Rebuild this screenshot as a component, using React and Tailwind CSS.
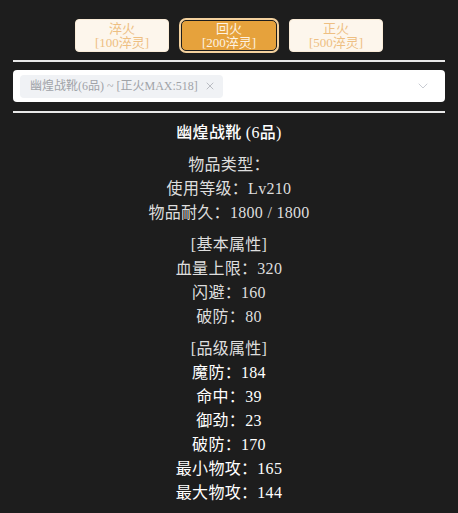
import React from 'react';
import { ChevronDown, X } from 'lucide-react';

const font = { fontFamily: '"Liberation Serif", "Noto Sans CJK SC", serif' };

const basics = ['血量上限：320', '闪避：160', '破防：80'];
const grades = ['魔防：184', '命中：39', '御劲：23', '破防：170', '最小物攻：165', '最大物攻：144'];

const FireButton = ({ name, cost, active }) => (
  <button
    className={
      active
        ? 'w-[96px] h-[31px] rounded-[5px] bg-[#e6a23c] text-[#fdf3e3] border border-[#1d1d1d] ring-2 ring-[#f3d19e] flex flex-col items-center justify-center text-[13px] leading-[14px]'
        : 'w-[94px] h-[33px] rounded-[4px] bg-[#fdf6ec] text-[#eebf82] border border-[#faecd8] flex flex-col items-center justify-center text-[13px] leading-[14px]'
    }
  >
    <span>{name}</span>
    <span>[{cost}淬灵]</span>
  </button>
);

export default function App() {
  return (
    <div className="min-h-screen bg-[#1d1d1d] px-[13px] pt-[19px] pb-2" style={font}>
      {/* fire selection */}
      <div className="flex justify-center items-center gap-[12px]">
        <FireButton name="淬火" cost="100" />
        <FireButton name="回火" cost="200" active />
        <FireButton name="正火" cost="500" />
      </div>

      <div className="mt-[8px] h-[2px] bg-[#e8e8e8]" />

      {/* item select */}
      <div className="mt-[8px] h-8 bg-white rounded-[4px] flex items-center pl-[7px] pr-[14px]">
        <div className="h-[23px] bg-[#f0f2f5] rounded-[4px] flex items-center gap-[6px] pl-[10px] pr-[7px] text-[12px] text-[#a0a3a8]">
          <span>幽煌战靴(6品) ~ [正火MAX:518]</span>
          <X size={12} strokeWidth={1.5} className="text-[#a8abb2]" />
        </div>
        <div className="flex-1" />
        <ChevronDown size={16} strokeWidth={1.3} className="text-[#c0c4cc]" />
      </div>

      <div className="mt-[9px] h-[2px] bg-[#e8e8e8]" />

      {/* item detail */}
      <div className="mt-[8px] flex flex-col items-center text-[16px] leading-6 tracking-[0.3px]">
        <div className="text-white font-medium">幽煌战靴 (6品)</div>

        <div className="mt-[8px] flex flex-col items-center text-[#dedede]">
          <div>物品类型：</div>
          <div>使用等级：Lv210</div>
          <div>物品耐久：1800 / 1800</div>
        </div>

        <div className="mt-[8px] flex flex-col items-center text-[#dedede]">
          <div>[基本属性]</div>
          {basics.map((b) => (
            <div key={b}>{b}</div>
          ))}
        </div>

        <div className="mt-[8px] flex flex-col items-center">
          <div className="text-[#dedede]">[品级属性]</div>
          {grades.map((g) => (
            <div key={g} className="text-white">{g}</div>
          ))}
        </div>
      </div>
    </div>
  );
}
